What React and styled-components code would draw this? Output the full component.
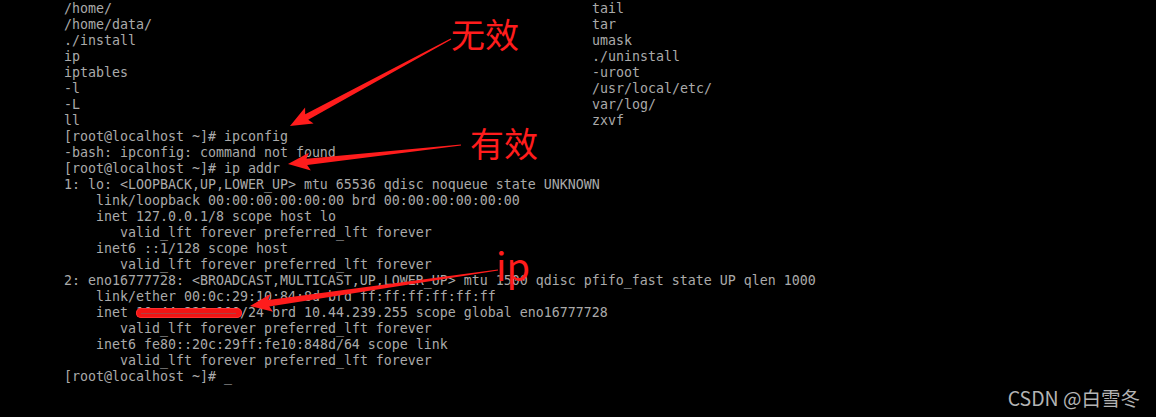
import React from "react";
import styled, { createGlobalStyle } from "styled-components";

const Global = createGlobalStyle`
  html, body { margin: 0; padding: 0; background: #000; }
  body { width: 1156px; height: 417px; overflow: hidden; }
`;

const Screen = styled.div`
  position: relative;
  width: 1156px;
  height: 417px;
  background: #000;
  overflow: hidden;
`;

const Terminal = styled.div`
  display: flex;
  flex-direction: column;
  padding-left: 64px;
  padding-top: 1px;
  font-family: "DejaVu Sans Mono", "Liberation Mono", monospace;
  font-size: 13.29px;
  line-height: 16px;
  color: #aaaaaa;
  white-space: pre;
`;

const ListGrid = styled.div`
  display: grid;
  grid-template-columns: 528px auto;
  grid-auto-rows: 16px;
`;

const Line = styled.div`
  height: 16px;
  padding-left: ${(p) => (p.$indent || 0) * 8}px;
`;

const Redacted = styled.span`
  position: relative;
  &::after {
    content: "";
    position: absolute;
    left: 0;
    right: -2px;
    top: 3px;
    height: 10px;
    border-radius: 5px;
    background: #f21414;
    box-shadow: inset 0 0 0 1px #ff3030;
  }
  &::before {
    content: "";
    position: absolute;
    left: 5px;
    right: 4px;
    top: 8px;
    height: 1px;
    background: #b04040;
    z-index: 1;
  }
`;

const Overlay = styled.svg`
  position: absolute;
  left: 0;
  top: 0;
  pointer-events: none;
`;

const Label = styled.div`
  position: absolute;
  left: ${(p) => p.$x}px;
  top: ${(p) => p.$y}px;
  font-family: "Noto Sans CJK SC", "Noto Sans", sans-serif;
  font-size: ${(p) => p.$size}px;
  line-height: 1;
  color: #ff1c1c;
  white-space: nowrap;
`;

const Watermark = styled.div`
  position: absolute;
  right: 16px;
  bottom: 10px;
  font-family: "Noto Sans CJK SC", "Noto Sans", sans-serif;
  font-size: 19.5px;
  line-height: 1;
  color: #b4b4b4;
  white-space: nowrap;
`;

const listRows = [
  ["/home/", "tail"],
  ["/home/data/", "tar"],
  ["./install", "umask"],
  ["ip", "./uninstall"],
  ["iptables", "-uroot"],
  ["-l", "/usr/local/etc/"],
  ["-L", "var/log/"],
  ["ll", "zxvf"],
];

const lines = [
  [0, "[root@localhost ~]# ipconfig"],
  [0, "-bash: ipconfig: command not found"],
  [0, "[root@localhost ~]# ip addr"],
  [0, "1: lo: <LOOPBACK,UP,LOWER_UP> mtu 65536 qdisc noqueue state UNKNOWN"],
  [4, "link/loopback 00:00:00:00:00:00 brd 00:00:00:00:00:00"],
  [4, "inet 127.0.0.1/8 scope host lo"],
  [7, "valid_lft forever preferred_lft forever"],
  [4, "inet6 ::1/128 scope host"],
  [7, "valid_lft forever preferred_lft forever"],
  [0, "2: eno16777728: <BROADCAST,MULTICAST,UP,LOWER_UP> mtu 1500 qdisc pfifo_fast state UP qlen 1000"],
  [4, "link/ether 00:0c:29:10:84:8d brd ff:ff:ff:ff:ff:ff"],
  [4, "REDACT"],
  [7, "valid_lft forever preferred_lft forever"],
  [4, "inet6 fe80::20c:29ff:fe10:848d/64 scope link"],
  [7, "valid_lft forever preferred_lft forever"],
  [0, "[root@localhost ~]# _"],
];

function arrowPoints(tx, ty, px, py, headLen = 19, headHalf = 9, shaftHalf = 3.2, tailHalf = 0.6) {
  const dx = px - tx;
  const dy = py - ty;
  const len = Math.hypot(dx, dy);
  const ux = dx / len;
  const uy = dy / len;
  const nx = -uy;
  const ny = ux;
  const bx = px - ux * headLen;
  const by = py - uy * headLen;
  const pts = [
    [tx + nx * tailHalf, ty + ny * tailHalf],
    [bx + nx * shaftHalf, by + ny * shaftHalf],
    [bx + nx * headHalf - ux * 3, by + ny * headHalf - uy * 3],
    [px, py],
    [bx - nx * headHalf - ux * 3, by - ny * headHalf - uy * 3],
    [bx - nx * shaftHalf, by - ny * shaftHalf],
    [tx - nx * tailHalf, ty - ny * tailHalf],
  ];
  return pts.map((p) => p.map((v) => v.toFixed(1)).join(",")).join(" ");
}

const arrows = [
  { t: [451, 39], p: [290, 126] },
  { t: [461, 145], p: [288, 164] },
  { t: [498, 270], p: [250, 306] },
];

export default function App() {
  return (
    <Screen>
      <Global />
      <Terminal>
        <ListGrid>
          {listRows.map(([a, b], i) => (
            <React.Fragment key={i}>
              <Line>{a}</Line>
              <Line>{b}</Line>
            </React.Fragment>
          ))}
        </ListGrid>
        {lines.map(([indent, text], i) =>
          text === "REDACT" ? (
            <Line key={i} $indent={indent}>
              {"inet "}
              <Redacted>{"10.44.239.100"}</Redacted>
              {"/24 brd 10.44.239.255 scope global eno16777728"}
            </Line>
          ) : (
            <Line key={i} $indent={indent}>
              {text}
            </Line>
          )
        )}
      </Terminal>
      <Overlay width="1156" height="417" viewBox="0 0 1156 417">
        {arrows.map((a, i) => (
          <polygon key={i} points={arrowPoints(a.t[0], a.t[1], a.p[0], a.p[1])} fill="#ff1c1c" />
        ))}
      </Overlay>
      <Label $x={451} $y={17} $size={34}>无效</Label>
      <Label $x={470} $y={126} $size={34}>有效</Label>
      <Label $x={496} $y={246} $size={38}>ip</Label>
      <Watermark>CSDN @白雪冬</Watermark>
    </Screen>
  );
}
